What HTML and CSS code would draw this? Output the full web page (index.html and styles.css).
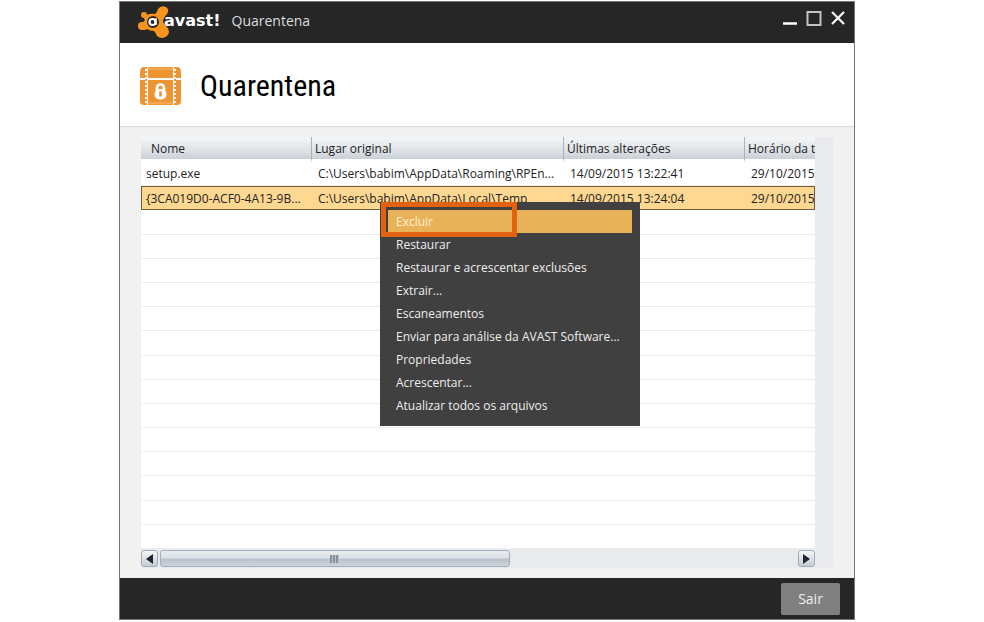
FILE: index.html
```html
<!DOCTYPE html>
<html lang="pt-BR">
<head>
    <meta charset="UTF-8">
    <meta name="viewport" content="width=device-width, initial-scale=1.0">
    <title>avast! Quarentena</title>
    <link rel="stylesheet" href="styles.css">
</head>
<body>
    <div class="window">
        <div class="titlebar">
            <svg class="logo" width="34" height="34" viewBox="0 0 34 34">
                <g fill="#f7941d">
                    <path d="M8 10Q13 8 17 9Q19 8 20 4Q23 0 28 2Q32 5 29 9Q25 13 25 17Q27 20 29 22Q33 27 29 31Q24 35 19 31Q18 28 16 26Q12 26 9 24Q6 26 3 24Q-1 20 3 18Q6 17 7 15Q6 13 5 12Z"/>
                    <circle cx="6" cy="10" r="3"/>
                    <circle cx="4" cy="21" r="4"/>
                </g>
                <circle cx="15" cy="17" r="6" fill="#262626"/>
                <circle cx="14.500" cy="17" r="3" fill="none" stroke="#fff" stroke-width="2.200"/>
                <path d="M18 13v7" stroke="#fff" stroke-width="1.500"/>
            </svg>
            <span class="brand">avast!</span>
            <span class="caption">Quarentena</span>
            <div class="window-buttons">
                <button type="button" aria-label="Minimizar">
                    <svg width="16" height="16" viewBox="0 0 16 16"><path d="M1 12.500h14" stroke="#fff" stroke-width="2.500"/></svg>
                </button>
                <button type="button" aria-label="Maximizar">
                    <svg width="16" height="16" viewBox="0 0 16 16"><path d="M1.500 1h13v13h-13z" fill="none" stroke="#c4c4c4" stroke-width="2"/></svg>
                </button>
                <button type="button" aria-label="Fechar">
                    <svg width="16" height="16" viewBox="0 0 16 16"><path d="M2 1l12 12M14 1L2 13" stroke="#fff" stroke-width="2.200"/></svg>
                </button>
            </div>
        </div>

        <div class="header">
            <svg width="42" height="40" viewBox="0 0 42 40">
                <g fill="#ee9430">
                    <path d="M4 1h1v11H0V6q0-5 4-5z"/>
                    <path d="M8 1h25v11H8z"/>
                    <path d="M36 1h1q4 0 4 5v6h-5z"/>
                    <path d="M0 14h5v25H4q-4 0-4-4z"/>
                    <path d="M8 14h25v25H8z"/>
                    <path d="M36 14h5v21q0 4-4 4h-1z"/>
                </g>
                <path d="M6 1v38M35 1v38" stroke="#ee9430" stroke-width="2" stroke-dasharray="2 2"/>
                <path d="M8 3h25M8 37h25" stroke="#f6bd7c"/>
                <path d="M17 25v-3q0-3.500 3.500-3.500T24 22v3" fill="none" stroke="#fff" stroke-width="2.600"/>
                <rect x="14.500" y="23" width="12" height="10.500" rx="5" fill="#fff"/>
                <path d="M20.500 25.500v5" stroke="#ee9430" stroke-width="2.500"/>
            </svg>
            <h1>Quarentena</h1>
        </div>

        <div class="content">
            <div class="list">
                <table class="files">
                    <colgroup>
                        <col class="col-name">
                        <col class="col-place">
                        <col class="col-changed">
                        <col>
                    </colgroup>
                    <thead>
                        <tr><th>Nome</th><th>Lugar original</th><th>Últimas alterações</th><th>Horário da t</th></tr>
                    </thead>
                    <tbody>
                        <tr><td>setup.exe</td><td>C:\Users\babim\AppData\Roaming\RPEn...</td><td>14/09/2015 13:22:41</td><td>29/10/2015</td></tr>
                        <tr class="selected"><td>{3CA019D0-ACF0-4A13-9B...</td><td>C:\Users\babim\AppData\Local\Temp</td><td>14/09/2015 13:24:04</td><td>29/10/2015</td></tr>
                        <tr><td colspan="4"></td></tr>
                        <tr><td colspan="4"></td></tr>
                        <tr><td colspan="4"></td></tr>
                        <tr><td colspan="4"></td></tr>
                        <tr><td colspan="4"></td></tr>
                        <tr><td colspan="4"></td></tr>
                        <tr><td colspan="4"></td></tr>
                        <tr><td colspan="4"></td></tr>
                        <tr><td colspan="4"></td></tr>
                        <tr><td colspan="4"></td></tr>
                        <tr><td colspan="4"></td></tr>
                        <tr><td colspan="4"></td></tr>
                        <tr><td colspan="4"></td></tr>
                        <tr><td colspan="4"></td></tr>
                    </tbody>
                </table>

                <div class="scrollbar">
                    <button type="button" class="arrow" aria-label="Rolar para a esquerda">
                        <svg width="7" height="10" viewBox="0 0 7 10"><path d="M7 0v10L0 5z" fill="#1c2530"/></svg>
                    </button>
                    <div class="track"><div class="thumb"><span class="grip"></span></div></div>
                    <button type="button" class="arrow" aria-label="Rolar para a direita">
                        <svg width="7" height="10" viewBox="0 0 7 10"><path d="M0 0v10l7-5z" fill="#1c2530"/></svg>
                    </button>
                </div>

                <div class="menu">
                    <button type="button" class="active">Excluir</button>
                    <button type="button">Restaurar</button>
                    <button type="button">Restaurar e acrescentar exclusões</button>
                    <button type="button">Extrair...</button>
                    <button type="button">Escaneamentos</button>
                    <button type="button">Enviar para análise da AVAST Software...</button>
                    <button type="button">Propriedades</button>
                    <button type="button">Acrescentar...</button>
                    <button type="button">Atualizar todos os arquivos</button>
                    <div class="highlight"></div>
                </div>
            </div>
        </div>

        <div class="footer">
            <button type="button" class="exit">Sair</button>
        </div>
    </div>
</body>
</html>
```
FILE: styles.css
```css
* {
    box-sizing: border-box;
}

body {
    margin: 0;
    padding: 1px 10px 0 0;
    background-color: #fff;
    font-family: "Open Sans", "Noto Sans", sans-serif;
    font-size: 12px;
    color: #222;
}

button {
    font: inherit;
    border: none;
    padding: 0;
    cursor: pointer;
}

.window {
    max-width: 736px;
    margin: 0 auto;
    border: 1px solid #777;
    background-color: #f1f1f1;
}

.titlebar {
    display: flex;
    align-items: center;
    height: 41px;
    padding: 0 8px 4px 18px;
    background-color: #262626;
    color: #fff;
}

.logo {
    margin-top: 2px;
}

.brand {
    margin-left: -8px;
    font-family: "DejaVu Sans", sans-serif;
    font-size: 16px;
    font-weight: bold;
}

.caption {
    margin-left: 11px;
    font-size: 14px;
    color: #ddd;
}

.window-buttons {
    display: flex;
    gap: 8px;
    margin-left: auto;
}

.window-buttons button {
    display: flex;
    margin-bottom: 4px;
    background: none;
}

.header {
    display: flex;
    align-items: center;
    gap: 18px;
    height: 84px;
    padding-top: 2px;
    padding-left: 20px;
    background-color: #fff;
    border-bottom: 1px solid #dcdcdc;
}

.header h1 {
    margin: 0;
    font-family: "Roboto Condensed", "Liberation Sans Narrow", Roboto, sans-serif;
    font-size: 30px;
    font-weight: 400;
    color: #000;
}

.content {
    padding: 10px 21px;
}

.list {
    position: relative;
    padding-right: 18px;
    background-color: #e9eaee;
    border-radius: 4px;
}

.files {
    width: 100%;
    height: 412px;
    table-layout: fixed;
    border-collapse: separate;
    border-spacing: 0;
    background-color: #fff;
    border-radius: 4px 4px 0 0;
}

.col-name {
    width: 170px;
}

.col-place {
    width: 252px;
}

.col-changed {
    width: 181px;
}

.files th,
.files td {
    padding: 0 0 0 7px;
    overflow: hidden;
    white-space: nowrap;
    text-align: left;
}

.files th {
    height: 25px;
    padding-left: 3px;
    font-weight: normal;
    background: linear-gradient(#f4f5f7, #e3e7ea 50%, #c9d0d6);
    background-clip: padding-box;
    border-left: 1px solid #aab0b6;
    border-bottom: 3px solid #fff;
}

.files th:first-child {
    padding-left: 10px;
    border-left: none;
    border-top-left-radius: 4px;
}

.files th:last-child {
    border-top-right-radius: 6px;
}

.files td {
    height: 24px;
    border-bottom: 1px solid #ededed;
}

.files td:first-child {
    padding-left: 5px;
}

.files .selected td {
    background-color: #fed891;
    border-top: 1px solid #6d5c3c;
    border-bottom: 1px solid #6d5c3c;
}

.files .selected td:first-child {
    padding-left: 4px;
    border-left: 1px solid #6d5c3c;
}

.files .selected td:last-child {
    border-right: 1px solid #6d5c3c;
}

.scrollbar {
    display: flex;
    gap: 2px;
    height: 19px;
    padding: 1px 0;
}

.arrow {
    display: flex;
    align-items: center;
    justify-content: center;
    width: 17px;
    background: linear-gradient(#f4f6f8, #c3ccd5);
    border: 1px solid #a2acb6;
    border-radius: 3px;
}

.track {
    flex: 1;
}

.thumb {
    display: flex;
    align-items: center;
    justify-content: center;
    width: 55%;
    height: 100%;
    background: linear-gradient(#e9edf0, #dce1e6 45%, #b9c2cc 55%, #ccd3da);
    border: 1px solid #a6afb8;
    border-radius: 3px;
}

.grip {
    width: 9px;
    height: 8px;
    background: repeating-linear-gradient(90deg, #87919b 0 2px, #bcc4cb 2px 3px);
}

.menu {
    position: absolute;
    top: 65px;
    left: 239px;
    width: 260px;
    padding: 8px 8px 9px;
    background-color: #404040;
}

.menu button {
    display: block;
    width: 100%;
    height: 23px;
    padding: 0 8px;
    background: none;
    color: #eee;
    text-align: left;
    white-space: nowrap;
}

.menu .active {
    background-color: #e8b358;
    color: #fff0cf;
}

.highlight {
    position: absolute;
    top: 0;
    left: 1px;
    width: 136px;
    height: 35px;
    border: 5px solid #e2620f;
    pointer-events: none;
}

.footer {
    display: flex;
    align-items: center;
    justify-content: flex-end;
    height: 41px;
    padding-right: 14px;
    background-color: #262626;
}

.exit {
    width: 59px;
    height: 32px;
    font-size: 14px;
    background-color: #808080;
    color: #eee;
    border-radius: 2px;
}
```
